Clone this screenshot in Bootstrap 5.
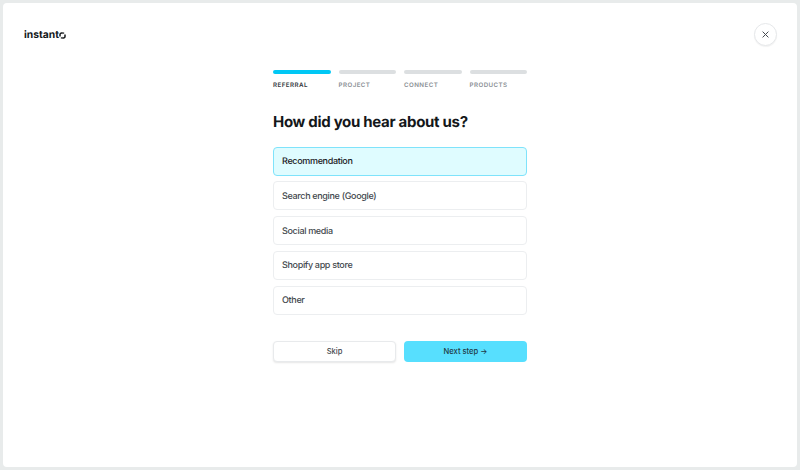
<!DOCTYPE html>
<html lang="en">
<head>
    <meta charset="UTF-8">
    <meta name="viewport" content="width=device-width, initial-scale=1.0">
    <title>Instant onboarding</title>
    <link href="https://cdn.jsdelivr.net/npm/bootstrap@5.3.0/dist/css/bootstrap.min.css" rel="stylesheet">
    <style>
        html, body {
            height: 470px;
            overflow: hidden;
        }
        body {
            background-color: #e8ebeb;
            padding: 3px;
            font-family: Inter, "Liberation Sans", sans-serif;
            text-rendering: geometricPrecision;
        }
        .panel {
            height: 464px;
            background-color: #fff;
            border-radius: 4px;
        }
        .top-bar {
            height: 67px;
            padding: 20px 20px 0 21px;
        }
        .logo-text {
            margin-top: 1px;
            font-size: 10.3px;
            font-weight: 700;
            line-height: 22px;
            color: #14171a;
        }
        .logo-mark {
            margin: 1px 0 0 .5px;
        }
        .close-btn {
            width: 23px;
            height: 23px;
            border: 1px solid #e6e8ea;
            box-shadow: 0 1px 1px rgba(0,0,0,0.05);
        }
        .wizard {
            width: 254px;
        }
        .step-bar {
            height: 3.5px;
            background-color: #dcdfe1;
            border-radius: 2px;
        }
        .step-bar.done {
            background-color: #00c8f5;
        }
        .step-label {
            margin-top: 7px;
            font-size: 6.2px;
            font-weight: 600;
            line-height: 9px;
            letter-spacing: 0.45px;
            color: #8a8f94;
        }
        .step-label.done {
            color: #33383d;
        }
        .title {
            margin: 20px 0 13px;
            font-size: 15px;
            font-weight: 700;
            line-height: 24px;
            letter-spacing: -0.3px;
            color: #14171a;
        }
        .choice {
            height: 29px;
            margin-bottom: 5.9px;
            padding: 1px 8px 0;
            border: 1px solid #eceef0;
            border-radius: 4px;
            font-size: 9px;
            font-weight: 500;
            letter-spacing: -0.33px;
            color: #43484d;
        }
        .choice.picked {
            background-color: #dffcff;
            border-color: #7fe3fb;
            color: #1c2024;
        }
        .button-row {
            margin-top: 26px;
        }
        .wizard-btn {
            height: 21px;
            padding: 0;
            border-radius: 4px;
            font-size: 7.6px;
            font-weight: 500;
            color: #43484d;
        }
        .skip-btn {
            background-color: #fff;
            border: 1px solid #e8eaec;
            box-shadow: 0 1px 2px rgba(0,0,0,0.1);
        }
        .next-btn {
            background-color: #57dffe;
            border: 0;
            color: #1f3a47;
        }
    </style>
</head>
<body>
    <div class="panel">
        <div class="top-bar d-flex justify-content-between align-items-start">
            <div class="logo-text d-flex align-items-center">
                instant<svg class="logo-mark" width="7" height="7" viewBox="0 0 7 7"><path d="M1 4.4V2.6A1.6 1.6 0 0 1 2.6 1H3.6M6 2.6v1.8A1.6 1.6 0 0 1 4.4 6H3.4" fill="none" stroke="#14171a" stroke-width="1.5"/><path d="M3.6 0 5.6 1 3.6 2.2zM3.4 7 1.4 6l2-1.2z" fill="#14171a"/></svg>
            </div>
            <button class="close-btn btn rounded-circle bg-white p-0 d-flex align-items-center justify-content-center" type="button" aria-label="Close">
                <svg width="7" height="7" viewBox="0 0 7 7"><path d="M.6.6l5.8 5.8M6.4.6.6 6.4" stroke="#454a50" stroke-width="1" fill="none"/></svg>
            </button>
        </div>

        <div class="wizard mx-auto">
            <div class="d-flex gap-2">
                <div class="flex-fill w-25"><div class="step-bar done"></div><div class="step-label done">REFERRAL</div></div>
                <div class="flex-fill w-25"><div class="step-bar"></div><div class="step-label">PROJECT</div></div>
                <div class="flex-fill w-25"><div class="step-bar"></div><div class="step-label">CONNECT</div></div>
                <div class="flex-fill w-25"><div class="step-bar"></div><div class="step-label">PRODUCTS</div></div>
            </div>

            <h1 class="title">How did you hear about us?</h1>

            <div class="choice picked d-flex align-items-center">Recommendation</div>
            <div class="choice d-flex align-items-center">Search engine (Google)</div>
            <div class="choice d-flex align-items-center">Social media</div>
            <div class="choice d-flex align-items-center">Shopify app store</div>
            <div class="choice d-flex align-items-center">Other</div>

            <div class="button-row d-flex gap-2">
                <button class="wizard-btn skip-btn btn w-50" type="button">Skip</button>
                <button class="wizard-btn next-btn btn w-50" type="button">Next step →</button>
            </div>
        </div>
    </div>
    <script src="https://cdn.jsdelivr.net/npm/bootstrap@5.3.0/dist/js/bootstrap.bundle.min.js"></script>
</body>
</html>
